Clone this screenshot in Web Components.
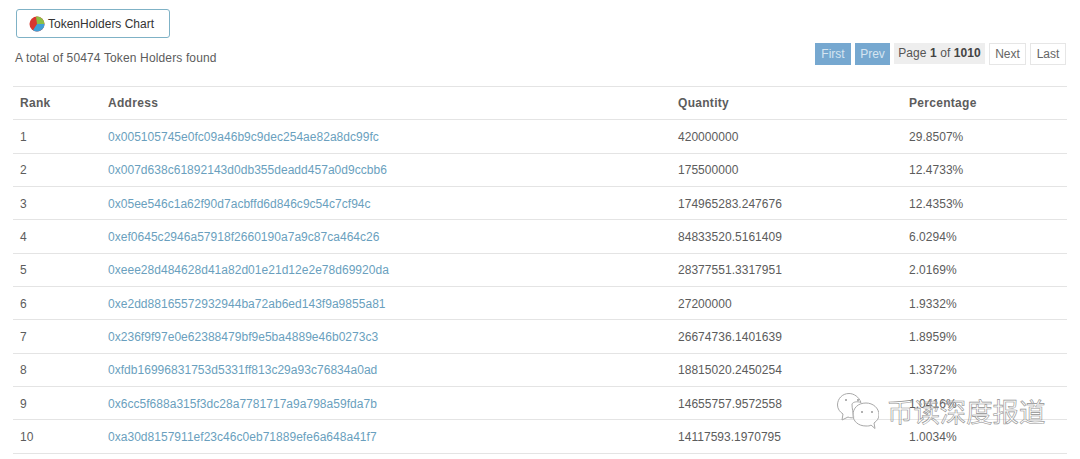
<!DOCTYPE html>
<html>
<head>
<meta charset="utf-8">
<title>Token Holders</title>
<style>
  html, body { margin: 0; background: #fff; }
  body { font: 12px "Liberation Sans", Arial, sans-serif; color: #555; }
</style>
</head>
<body>
<holders-page>
  <chart-button slot="chart">TokenHolders Chart</chart-button>
  <span slot="total">A total of 50474 Token Holders found</span>
  <page-nav slot="nav" page="1" pages="1010"></page-nav>
  <holders-table slot="table"></holders-table>
  <wechat-mark slot="mark">币读深度报道</wechat-mark>
</holders-page>

<script>
const html = String.raw;

const HOLDERS = [
  ["0x005105745e0fc09a46b9c9dec254ae82a8dc99fc", "420000000", "29.8507%"],
  ["0x007d638c61892143d0db355deadd457a0d9ccbb6", "175500000", "12.4733%"],
  ["0x05ee546c1a62f90d7acbffd6d846c9c54c7cf94c", "174965283.247676", "12.4353%"],
  ["0xef0645c2946a57918f2660190a7a9c87ca464c26", "84833520.5161409", "6.0294%"],
  ["0xeee28d484628d41a82d01e21d12e2e78d69920da", "28377551.3317951", "2.0169%"],
  ["0xe2dd88165572932944ba72ab6ed143f9a9855a81", "27200000", "1.9332%"],
  ["0x236f9f97e0e62388479bf9e5ba4889e46b0273c3", "26674736.1401639", "1.8959%"],
  ["0xfdb16996831753d5331ff813c29a93c76834a0ad", "18815020.2450254", "1.3372%"],
  ["0x6cc5f688a315f3dc28a7781717a9a798a59fda7b", "14655757.9572558", "1.0416%"],
  ["0xa30d8157911ef23c46c0eb71889efe6a648a41f7", "14117593.1970795", "1.0034%"],
];

class HoldersPage extends HTMLElement {
  constructor() {
    super();
    this.attachShadow({ mode: "open" });
    this.shadowRoot.innerHTML = html`
      <style>
        :host { display: block; position: relative; height: 459px; overflow: hidden; padding: 9px 13px 0; box-sizing: border-box; }
        .chart { padding-left: 3px; }
        .bar { display: flex; justify-content: space-between; align-items: flex-start; margin-top: 5px; height: 43px; }
        .total { padding: 8px 0 0 2px; font-size: 12px; line-height: 14px; letter-spacing: .14px; color: #5c5c5c; }
      </style>
      <div class="chart"><slot name="chart"></slot></div>
      <div class="bar">
        <div class="total"><slot name="total"></slot></div>
        <slot name="nav"></slot>
      </div>
      <slot name="table"></slot>
      <slot name="mark"></slot>
    `;
  }
}

class ChartButton extends HTMLElement {
  constructor() {
    super();
    this.attachShadow({ mode: "open" });
    this.shadowRoot.innerHTML = html`
      <style>
        :host { display: inline-flex; align-items: center; gap: 3px; box-sizing: border-box; width: 154px; height: 29px; padding-left: 12px; border: 1px solid #7fb2c6; border-radius: 3px; background: #fff; color: #333; font-size: 12px; }
        svg { display: block; }
      </style>
      <svg width="16" height="16" viewBox="0 0 16 16">
        <circle cx="8" cy="8" r="7.500" fill="#d8362f"/>
        <path d="M8 8 L7 .6 A7.500 7.500 0 0 1 15.500 8 Z" fill="#8cbf45"/>
        <path d="M8 8 L15.500 8 A7.500 7.500 0 0 1 4 14.300 Z" fill="#3f9fd6"/>
      </svg>
      <slot></slot>
    `;
  }
}

class PageNav extends HTMLElement {
  constructor() {
    super();
    this.attachShadow({ mode: "open" });
  }

  connectedCallback() {
    const page = this.getAttribute("page");
    const pages = this.getAttribute("pages");
    this.shadowRoot.innerHTML = html`
      <style>
        :host { display: flex; gap: 4px; align-items: flex-start; margin-right: 1px; font-size: 12px; }
        span { box-sizing: border-box; height: 22px; line-height: 20px; border: 1px solid #e6e6e6; text-align: center; color: #666; }
        .off { background: #76a8d0; border-color: #76a8d0; color: #d5e5f1; }
        .cur { background: #eeeeee; border-color: #eeeeee; color: #555; height: 21px; line-height: 19px; width: 91px; letter-spacing: .08px; }
        .cur b { color: #444; }
      </style>
      <span class="off" style="width:36px">First</span>
      <span class="off" style="width:35px">Prev</span>
      <span class="cur">Page <b>${page}</b> of <b>${pages}</b></span>
      <span style="width:37px">Next</span>
      <span style="width:36px">Last</span>
    `;
  }
}

class HoldersTable extends HTMLElement {
  constructor() {
    super();
    this.attachShadow({ mode: "open" });
  }

  connectedCallback() {
    const rows = HOLDERS.map(([address, quantity, percent], i) => html`
      <tr>
        <td>${i + 1}</td>
        <td><a>${address}</a></td>
        <td>${quantity}</td>
        <td>${percent}</td>
      </tr>`).join("");
    this.shadowRoot.innerHTML = html`
      <style>
        :host { display: block; }
        table { width: 1054px; border-collapse: collapse; table-layout: fixed; border-top: 1px solid #e4e4e4; }
        th, td { height: 33.33px; padding: 0 0 0 7px; box-sizing: border-box; text-align: left; border-bottom: 1px solid #e4e4e4; font-size: 12px; }
        td { padding-top: 1px; color: #5c5c5c; letter-spacing: .03px; }
        th { font-weight: bold; color: #5c5c5c; letter-spacing: .3px; }
        a { color: #6a9fbe; }
      </style>
      <table>
        <colgroup><col style="width:88px"><col style="width:570px"><col style="width:231px"><col style="width:165px"></colgroup>
        <thead><tr><th>Rank</th><th>Address</th><th>Quantity</th><th>Percentage</th></tr></thead>
        <tbody>${rows}</tbody>
      </table>
    `;
  }
}

class WechatMark extends HTMLElement {
  constructor() {
    super();
    this.attachShadow({ mode: "open" });
    this.shadowRoot.innerHTML = html`
      <style>
        :host { position: absolute; left: 837px; top: 393px; display: flex; align-items: flex-start; gap: 8px; }
        svg { display: block; }
        .name { font: 26.4px/36px "Noto Sans CJK SC", sans-serif; color: rgba(255,255,255,.35); -webkit-text-stroke: .6px #8c8c8c; white-space: nowrap; opacity: .95; }
      </style>
      <svg width="42" height="36" viewBox="0 0 42 36" fill="none" stroke="#a8a8a8" stroke-width="1">
        <path d="M15 11 C16 9 20 8 24 9.500 C22 4 17 .5 12 .5 C5 .5 .5 6 .5 12 C.5 16 3 19 6 21 L5 27 L11 24 C13 25 15 25 17 24.500 C16 20 15 15 15 11 Z" fill="rgba(255,255,255,.6)"/>
        <path d="M29 10 C21 10 16 15 16 22 C16 28 21 33 29 33 C31 33 33 33 34 32 L38 35.500 L37 30 C40 28 42 25 42 22 C42 15 36 10 29 10 Z" fill="rgba(255,255,255,.6)"/>
        <circle cx="9" cy="7" r="1" stroke="none" fill="#999"/><circle cx="21" cy="7" r="1" stroke="none" fill="#999"/>
        <circle cx="25" cy="19" r="1" stroke="none" fill="#999"/><circle cx="35" cy="19" r="1" stroke="none" fill="#999"/>
      </svg>
      <span class="name"><slot></slot></span>
    `;
  }
}

customElements.define("holders-page", HoldersPage);
customElements.define("chart-button", ChartButton);
customElements.define("page-nav", PageNav);
customElements.define("holders-table", HoldersTable);
customElements.define("wechat-mark", WechatMark);
</script>
</body>
</html>
